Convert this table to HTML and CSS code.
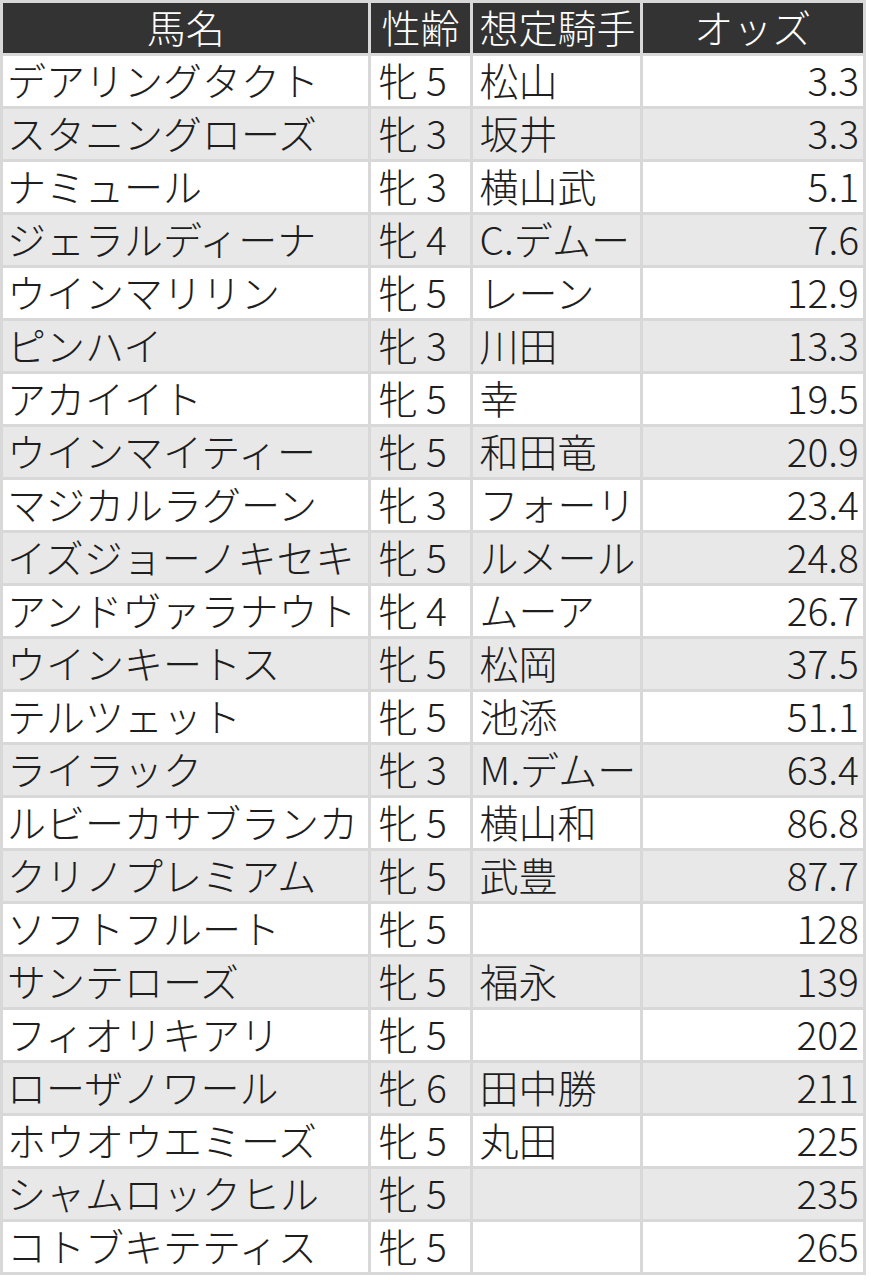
FILE: index.html
```html
<!DOCTYPE html>
<html lang="ja">
<head>
<meta charset="utf-8">
<title>想定オッズ</title>
<link rel="stylesheet" href="styles.css">
</head>
<body>
<table class="odds">
  <colgroup>
    <col class="c-name"><col class="c-sex"><col class="c-jockey"><col class="c-odds">
  </colgroup>
  <thead>
    <tr><th>馬名</th><th class="sex">性齢</th><th class="jockey">想定騎手</th><th>オッズ</th></tr>
  </thead>
  <tbody>
    <tr><td>デアリングタクト</td><td class="sex">牝 5</td><td class="jockey">松山</td><td class="num">3.3</td></tr>
    <tr><td>スタニングローズ</td><td class="sex">牝 3</td><td class="jockey">坂井</td><td class="num">3.3</td></tr>
    <tr><td>ナミュール</td><td class="sex">牝 3</td><td class="jockey">横山武</td><td class="num">5.1</td></tr>
    <tr><td>ジェラルディーナ</td><td class="sex">牝 4</td><td class="jockey">C.デムー</td><td class="num">7.6</td></tr>
    <tr><td>ウインマリリン</td><td class="sex">牝 5</td><td class="jockey">レーン</td><td class="num">12.9</td></tr>
    <tr><td>ピンハイ</td><td class="sex">牝 3</td><td class="jockey">川田</td><td class="num">13.3</td></tr>
    <tr><td>アカイイト</td><td class="sex">牝 5</td><td class="jockey">幸</td><td class="num">19.5</td></tr>
    <tr><td>ウインマイティー</td><td class="sex">牝 5</td><td class="jockey">和田竜</td><td class="num">20.9</td></tr>
    <tr><td>マジカルラグーン</td><td class="sex">牝 3</td><td class="jockey">フォーリ</td><td class="num">23.4</td></tr>
    <tr><td>イズジョーノキセキ</td><td class="sex">牝 5</td><td class="jockey">ルメール</td><td class="num">24.8</td></tr>
    <tr><td>アンドヴァラナウト</td><td class="sex">牝 4</td><td class="jockey">ムーア</td><td class="num">26.7</td></tr>
    <tr><td>ウインキートス</td><td class="sex">牝 5</td><td class="jockey">松岡</td><td class="num">37.5</td></tr>
    <tr><td>テルツェット</td><td class="sex">牝 5</td><td class="jockey">池添</td><td class="num">51.1</td></tr>
    <tr><td>ライラック</td><td class="sex">牝 3</td><td class="jockey">M.デムー</td><td class="num">63.4</td></tr>
    <tr><td>ルビーカサブランカ</td><td class="sex">牝 5</td><td class="jockey">横山和</td><td class="num">86.8</td></tr>
    <tr><td>クリノプレミアム</td><td class="sex">牝 5</td><td class="jockey">武豊</td><td class="num">87.7</td></tr>
    <tr><td>ソフトフルート</td><td class="sex">牝 5</td><td class="jockey"></td><td class="num">128</td></tr>
    <tr><td>サンテローズ</td><td class="sex">牝 5</td><td class="jockey">福永</td><td class="num">139</td></tr>
    <tr><td>フィオリキアリ</td><td class="sex">牝 5</td><td class="jockey"></td><td class="num">202</td></tr>
    <tr><td>ローザノワール</td><td class="sex">牝 6</td><td class="jockey">田中勝</td><td class="num">211</td></tr>
    <tr><td>ホウオウエミーズ</td><td class="sex">牝 5</td><td class="jockey">丸田</td><td class="num">225</td></tr>
    <tr><td>シャムロックヒル</td><td class="sex">牝 5</td><td class="jockey"></td><td class="num">235</td></tr>
    <tr><td>コトブキテティス</td><td class="sex">牝 5</td><td class="jockey"></td><td class="num">265</td></tr>
  </tbody>
</table>
</body>
</html>
```

FILE: styles.css
```css
html, body {
  margin: 0;
  padding: 0;
  background: #ffffff;
}

.odds {
  table-layout: fixed;
  border-collapse: separate;
  border-spacing: 3px;
  width: 866px;
  background: #d8d8d8;
  font-family: "Noto Sans CJK JP", "Noto Sans", sans-serif;
  font-size: 39px;
  font-weight: 300;
  color: #1e1e1e;
}

.c-name { width: 365px; }
.c-sex { width: 98px; }
.c-jockey { width: 167px; }
.c-odds { width: 220px; }

.odds th,
.odds td {
  height: 47px;
  padding: 0 4px 3px;
  line-height: 47px;
  white-space: nowrap;
  font-weight: 300;
}

.odds th {
  background: #333333;
  color: #ffffff;
  text-align: center;
}

.odds td {
  background: #ffffff;
  text-align: left;
}

.odds td.sex {
  padding-left: 7px;
}

.odds .jockey {
  padding-left: 7px;
  text-align: left;
}

.odds tbody tr:nth-child(even) td {
  background: #e8e8e8;
}

.odds td.num {
  text-align: right;
}
```
